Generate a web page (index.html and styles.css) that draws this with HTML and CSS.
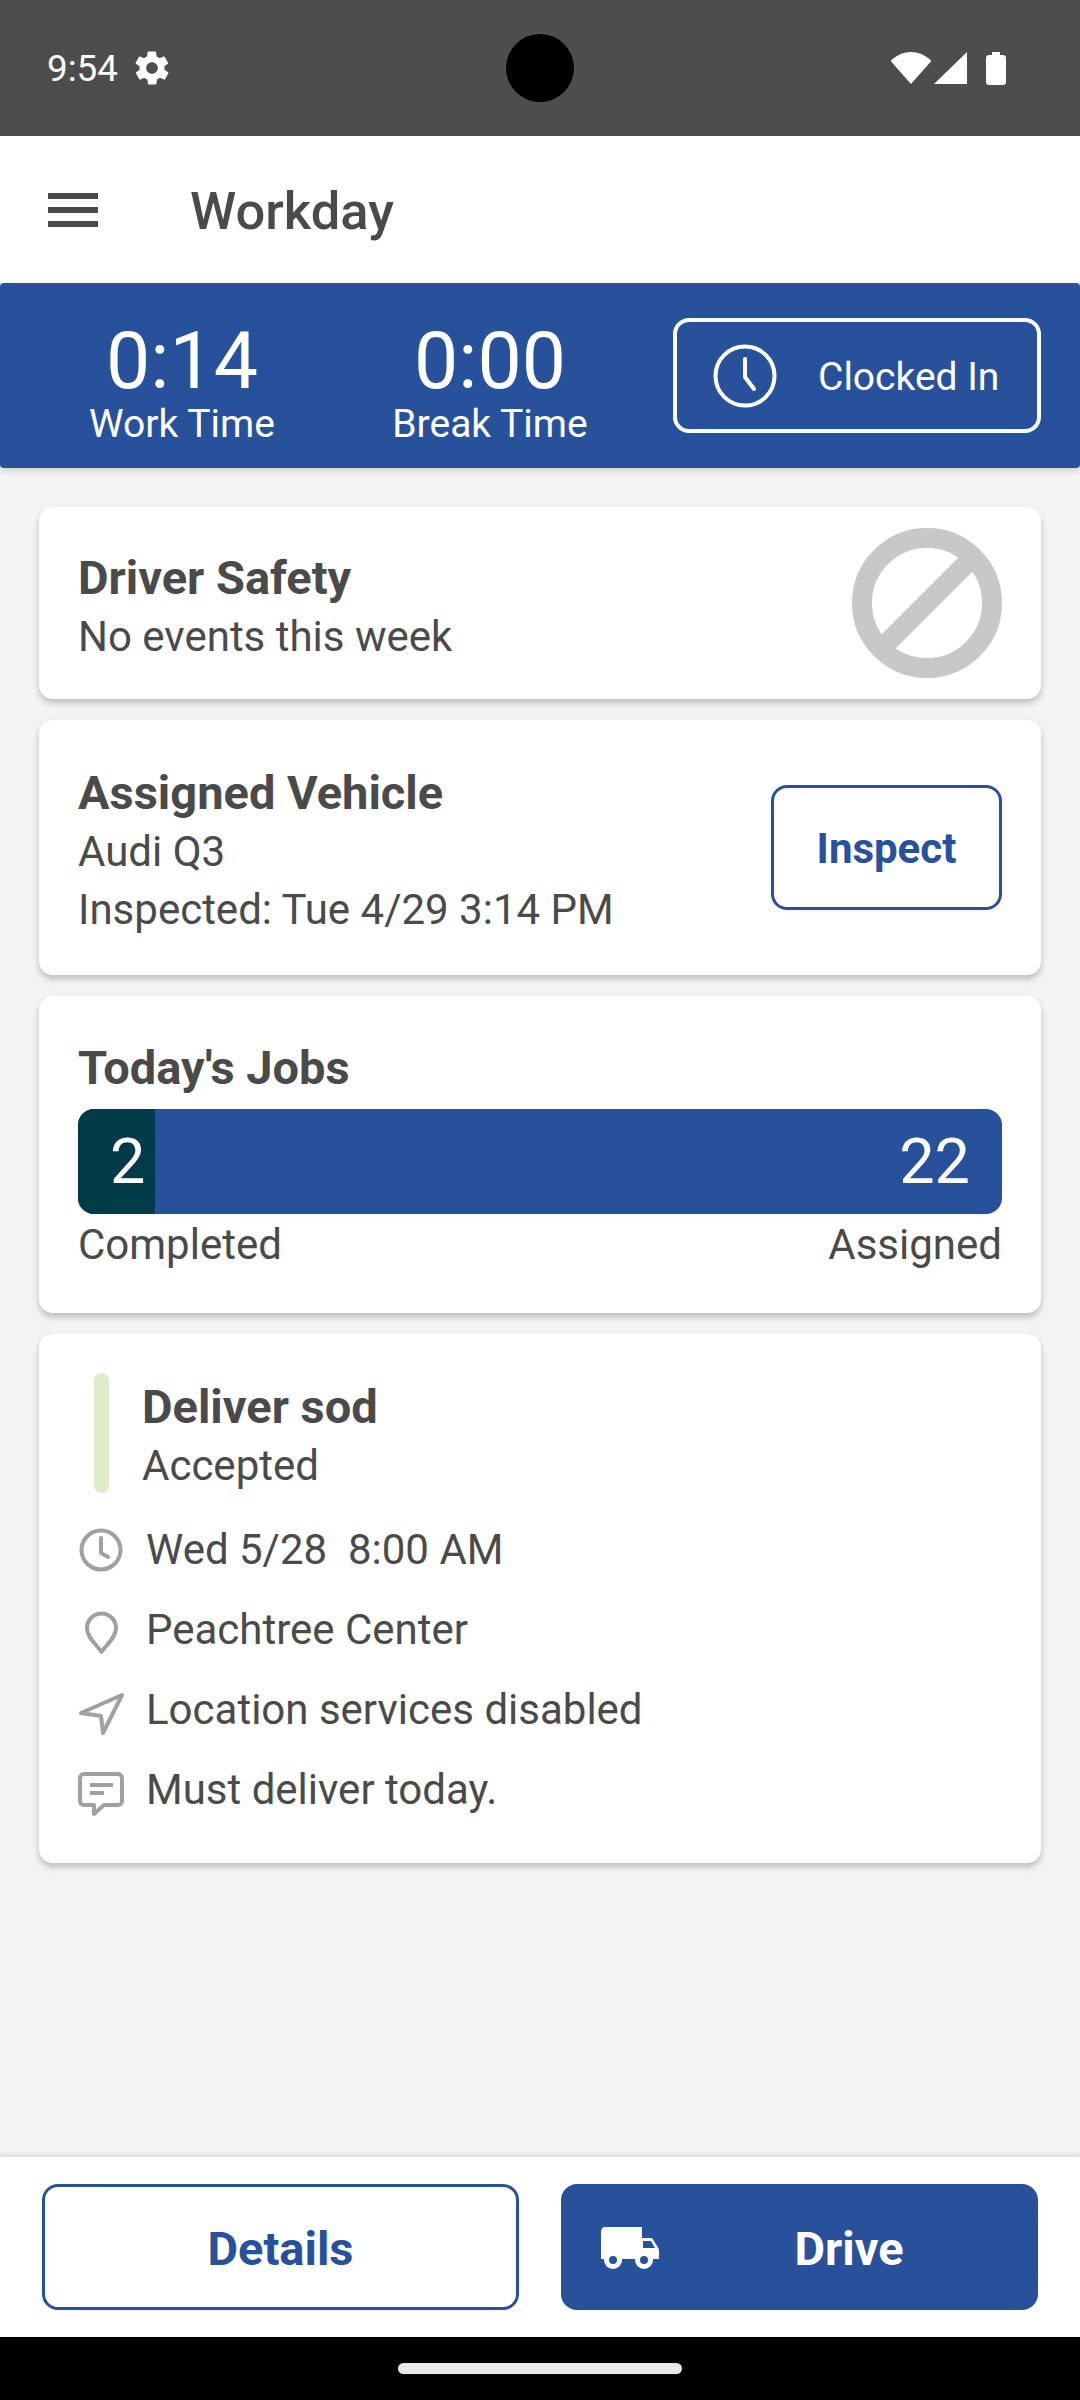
FILE: index.html
```html
<!DOCTYPE html>
<html>
<head>
    <meta name="viewport" content="width=device-width">
    <link rel="stylesheet" href="styles.css">
</head>
<body>
    <div class="status">
        <div class="status-left">
            <span class="status-time">9:54</span>
            <svg class="gear" viewBox="0 0 24 24"><path fill="#fff" d="M19.4 13c0-.3.1-.6.1-1s0-.7-.1-1l2.1-1.6c.2-.2.2-.4.1-.6l-2-3.5c-.1-.2-.4-.3-.6-.2l-2.5 1c-.5-.4-1.1-.7-1.7-1l-.4-2.6c0-.3-.2-.4-.5-.4h-4c-.3 0-.5.1-.5.4l-.4 2.6c-.6.3-1.2.6-1.7 1l-2.5-1c-.2-.1-.5 0-.6.2l-2 3.5c-.1.2-.1.4.1.6L4.6 11c0 .3-.1.7-.1 1s0 .7.1 1l-2.1 1.6c-.2.2-.2.4-.1.6l2 3.5c.1.2.4.3.6.2l2.5-1c.5.4 1.1.7 1.7 1l.4 2.6c0 .3.2.4.5.4h4c.3 0 .5-.1.5-.4l.4-2.6c.6-.3 1.2-.6 1.7-1l2.5 1c.2.1.5 0 .6-.2l2-3.5c.1-.2.1-.4-.1-.6L19.4 13zM12 15.5c-1.9 0-3.5-1.6-3.5-3.5s1.6-3.5 3.5-3.5 3.5 1.6 3.5 3.5-1.6 3.5-3.5 3.5z"/></svg>
        </div>
        <div class="camera"></div>
        <div class="status-right">
            <svg class="wifi" viewBox="0 0 40 32"><path fill="#fff" d="M20 32 1 10.5C-.5 9 0 8 1 7.5 6 3 13 0 20 0s14 3 19 7.5c1 .5 1.5 1.5 0 3z"/></svg>
            <svg class="signal" viewBox="0 0 33 32"><path fill="#fff" d="M33 0v32H0z"/></svg>
            <svg class="battery" viewBox="0 0 20 33"><path fill="#fff" d="M6 0h8v3h3c1.5 0 3 1 3 3v24c0 2-1.5 3-3 3H3c-1.5 0-3-1-3-3V6c0-2 1.5-3 3-3h3z"/></svg>
        </div>
    </div>

    <div class="appbar">
        <div class="hamburger"><span></span><span></span><span></span></div>
        <div class="appbar-title">Workday</div>
    </div>

    <div class="clockbar">
        <div class="stat">
            <div class="stat-num">0:14</div>
            <div class="stat-label">Work Time</div>
        </div>
        <div class="stat">
            <div class="stat-num">0:00</div>
            <div class="stat-label">Break Time</div>
        </div>
        <div class="clocked">
            <svg class="clocked-icon" viewBox="0 0 64 64" fill="none" stroke="#fff" stroke-width="4"><circle cx="32" cy="32" r="29.5"/><path d="M32 15v18l9 12" stroke-linecap="round" stroke-linejoin="round"/></svg>
            <span class="clocked-text">Clocked In</span>
        </div>
    </div>

    <div class="main">
        <div class="card card-safety">
            <div class="card-text">
                <div class="card-title">Driver Safety</div>
                <div class="card-line">No events this week</div>
            </div>
            <svg class="no-icon" viewBox="0 0 150 150" fill="none" stroke="#c8c8c8" stroke-width="20"><circle cx="75" cy="75" r="65"/><path d="M29 121 121 29"/></svg>
        </div>

        <div class="card card-vehicle">
            <div class="card-text">
                <div class="card-title">Assigned Vehicle</div>
                <div class="card-line">Audi Q3</div>
                <div class="card-line">Inspected: Tue 4/29 3:14 PM</div>
            </div>
            <div class="btn-inspect">Inspect</div>
        </div>

        <div class="card card-jobs">
            <div class="card-title">Today's Jobs</div>
            <div class="jobs-bar">
                <div class="jobs-done">2</div>
                <div class="jobs-total">22</div>
            </div>
            <div class="jobs-labels">
                <span>Completed</span>
                <span>Assigned</span>
            </div>
        </div>

        <div class="card card-job">
            <div class="job-head">
                <div class="job-status"></div>
                <div class="job-text">
                    <div class="card-title">Deliver sod</div>
                    <div class="card-line">Accepted</div>
                </div>
            </div>
            <div class="job-row">
                <svg class="job-icon icon-clock" viewBox="0 0 48 48" fill="none" stroke="#a0a0a0" stroke-width="4"><circle cx="24" cy="24" r="19.5"/><path d="M24 12v15l7 4" stroke-linejoin="round" stroke-linecap="round"/></svg>
                <span>Wed 5/28&nbsp; 8:00 AM</span>
            </div>
            <div class="job-row">
                <svg class="job-icon icon-pin" viewBox="0 0 48 48" fill="none" stroke="#a0a0a0" stroke-width="4"><path d="M24.5 43C20 36 10 29 10 19a14.5 14.5 0 0 1 29 0C39 29 29 36 24.5 43z" stroke-linejoin="round"/></svg>
                <span>Peachtree Center</span>
            </div>
            <div class="job-row">
                <svg class="job-icon icon-nav" viewBox="0 0 48 48" fill="none" stroke="#a0a0a0" stroke-width="4"><path d="M45 5 4 23l20 3 2 17z" stroke-linejoin="round"/></svg>
                <span>Location services disabled</span>
            </div>
            <div class="job-row">
                <svg class="job-icon icon-comment" viewBox="0 0 48 48" fill="none" stroke="#a0a0a0" stroke-width="4"><path d="M7 4h34a4 4 0 0 1 4 4v23a4 4 0 0 1-4 4H27l-10 9v-9H7a4 4 0 0 1-4-4V8a4 4 0 0 1 4-4z" stroke-linejoin="round"/><path d="M13 15h23M13 23h14"/></svg>
                <span>Must deliver today.</span>
            </div>
        </div>
    </div>

    <div class="footer">
        <div class="btn btn-details">Details</div>
        <div class="btn btn-drive">
            <svg class="truck" viewBox="0 0 60 44">
                <path fill="#fff" d="M5 1h37v11h8c1.5 0 2.5.5 3 1.5l5 8c.5 1 1 2 1 3V33H1V5c0-2 2-4 4-4z"/>
                <path fill="#28519b" d="M43 15h8l4 7H43z"/>
                <circle cx="13" cy="34" r="9" fill="#fff"/>
                <circle cx="44" cy="34" r="9" fill="#fff"/>
                <circle cx="13" cy="34" r="4" fill="#28519b"/>
                <circle cx="44" cy="34" r="4" fill="#28519b"/>
            </svg>
            <span class="btn-label">Drive</span>
        </div>
    </div>

    <div class="navbar"><div class="nav-pill"></div></div>
</body>
</html>
```

FILE: styles.css
```css
* {
    box-sizing: border-box;
}
body {
    margin: 0;
    width: 1080px;
    height: 2400px;
    display: flex;
    flex-direction: column;
    background: #f3f3f3;
    font-family: Roboto, sans-serif;
    color: #4a4a4a;
    overflow: hidden;
}

/* status bar */
.status {
    height: 136px;
    background: #4d4d4d;
    display: flex;
    align-items: center;
    justify-content: space-between;
    padding: 0 74px 0 47px;
    position: relative;
    flex: none;
}
.status-left {
    display: flex;
    align-items: center;
    gap: 14px;
}
.status-time {
    color: #fff;
    font-size: 36.75px;
}
.gear {
    width: 40px;
    height: 40px;
}
.camera {
    position: absolute;
    left: 506px;
    top: 34px;
    width: 68px;
    height: 68px;
    border-radius: 50%;
    background: #000;
}
.status-right {
    display: flex;
    align-items: center;
    gap: 3px;
}
.wifi {
    width: 40px;
    height: 32px;
}
.signal {
    width: 33px;
    height: 32px;
}
.battery {
    width: 20px;
    height: 33px;
    margin-left: 16px;
}

/* app bar */
.appbar {
    height: 147px;
    background: #fff;
    display: flex;
    align-items: center;
    padding-left: 48px;
    flex: none;
}
.hamburger {
    width: 50px;
    display: flex;
    flex-direction: column;
    gap: 8px;
    margin-right: 92px;
}
.hamburger span {
    height: 6px;
    background: #4a4a4a;
}
.appbar-title {
    font-size: 52.5px;
    font-weight: 500;
    margin-top: 2px;
}

/* work time strip */
.clockbar {
    height: 185px;
    background: #28519b;
    color: #fff;
    display: flex;
    align-items: center;
    padding-left: 28px;
    box-shadow: 0 3px 6px rgba(0, 0, 0, 0.15);
    border-radius: 4px;
    position: relative;
    flex: none;
}
.stat {
    width: 308px;
    text-align: center;
    margin-top: 19px;
}
.stat-num {
    font-size: 78.75px;
    line-height: 76px;
}
.stat-label {
    font-size: 39px;
    line-height: 45px;
    margin-top: 3px;
}
.clocked {
    width: 368px;
    height: 115px;
    margin-left: 29px;
    border: 4px solid #fff;
    border-radius: 16px;
    display: flex;
    align-items: center;
    padding-left: 36px;
}
.clocked-icon {
    width: 64px;
    height: 64px;
}
.clocked-text {
    font-size: 39px;
    margin-left: 41px;
    margin-top: 2px;
}

/* cards */
.main {
    flex: 1;
    padding: 39px 39px 0;
    display: flex;
    flex-direction: column;
    gap: 21px;
}
.card {
    background: #fff;
    border-radius: 14px;
    box-shadow: 0 4px 6px rgba(0, 0, 0, 0.22);
    padding: 0 39px;
}
.card-text {
    margin-top: 7px;
}
.card-title {
    font-size: 47px;
    font-weight: 700;
    line-height: 60px;
}
.card-line {
    font-size: 42px;
    line-height: 58px;
}
.card-safety {
    height: 192px;
    display: flex;
    align-items: center;
    justify-content: space-between;
}
.no-icon {
    width: 150px;
    height: 150px;
}
.card-vehicle {
    height: 255px;
    display: flex;
    align-items: center;
    justify-content: space-between;
}
.btn-inspect {
    width: 231px;
    height: 125px;
    padding-top: 2px;
    border: 3px solid #28519b;
    border-radius: 16px;
    color: #28519b;
    font-size: 42px;
    font-weight: 700;
    display: flex;
    align-items: center;
    justify-content: center;
}
.card-jobs {
    height: 317px;
    padding-top: 42px;
}
.jobs-bar {
    height: 105px;
    margin-top: 11px;
    background: #28519b;
    border-radius: 16px;
    overflow: hidden;
    display: flex;
    justify-content: space-between;
    align-items: center;
    color: #fff;
    font-size: 63px;
}
.jobs-done {
    width: 77px;
    height: 100%;
    background: #003b47;
    padding-left: 32px;
    display: flex;
    align-items: center;
}
.jobs-total {
    padding-right: 32px;
}
.jobs-labels {
    display: flex;
    justify-content: space-between;
    font-size: 42px;
    line-height: 62px;
}
.card-job {
    height: 529px;
    padding: 39px 0 0 55px;
}
.job-head {
    display: flex;
    gap: 33px;
    margin-bottom: 14px;
}
.job-status {
    width: 15px;
    height: 120px;
    background: #dcedc8;
    border-radius: 8px;
}
.job-text {
    margin-top: 4px;
}
.job-row {
    height: 80px;
    margin-left: -17px;
    display: flex;
    align-items: center;
    font-size: 42px;
    gap: 21px;
}
.job-icon {
    width: 48px;
    height: 48px;
}
.icon-clock {
    margin-top: 2px;
}
.icon-pin {
    margin-top: 8px;
}
.icon-nav,
.icon-comment {
    margin-top: 10px;
}

/* bottom buttons */
.footer {
    height: 180px;
    background: #fff;
    display: flex;
    align-items: center;
    justify-content: space-between;
    padding: 0 42px;
    box-shadow: 0 -2px 5px rgba(0, 0, 0, 0.12);
    position: relative;
    flex: none;
}
.btn {
    width: 477px;
    height: 126px;
    padding-top: 2px;
    border-radius: 16px;
    font-size: 47px;
    font-weight: 700;
    display: flex;
    align-items: center;
    justify-content: center;
}
.btn-details {
    border: 3px solid #28519b;
    color: #28519b;
}
.btn-drive {
    background: #28519b;
    color: #fff;
    padding-left: 39px;
}
.truck {
    width: 60px;
    height: 44px;
    flex: none;
}
.btn-label {
    flex: 1;
    text-align: center;
}
.navbar {
    height: 63px;
    background: #000;
    padding-top: 26px;
    flex: none;
}
.nav-pill {
    width: 284px;
    height: 11px;
    margin: 0 auto;
    background: #e8e8e8;
    border-radius: 6px;
}
```
